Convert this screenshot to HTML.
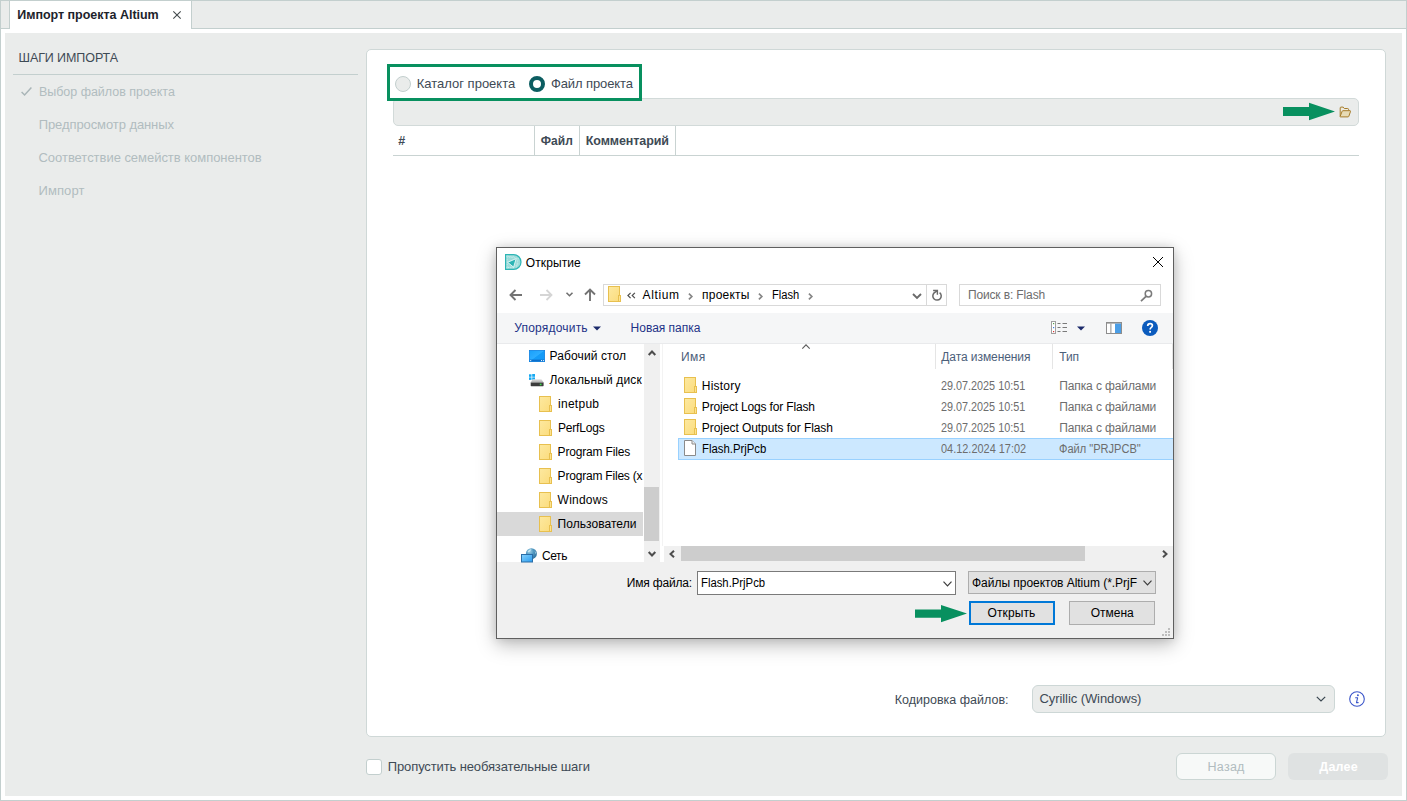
<!DOCTYPE html>
<html lang="ru"><head><meta charset="utf-8"><title>Импорт проекта Altium</title>
<style>
*{box-sizing:border-box;margin:0;padding:0}
html,body{width:1407px;height:801px;overflow:hidden;background:#fff}
body{position:relative;font-family:"Liberation Sans",sans-serif;font-size:13px;color:#3a4650}
.a{position:absolute}
.t{position:absolute;white-space:nowrap;line-height:20px;height:20px;transform-origin:0 50%}
svg{position:absolute;overflow:visible}
/* app chrome */
#frame{left:0;top:0;width:1407px;height:801px;border:1px solid #c3cfce}
#strip{left:1px;top:1px;width:1405px;height:28px;background:#eaeceb;border-bottom:1px solid #c3cfce}
#tabL{left:9px;top:1px;width:1px;height:28px;background:#c3cfce}
#tab{left:10px;top:1px;width:181px;height:28px;background:#fff}
#tabR{left:191px;top:1px;width:1px;height:28px;background:#c3cfce}
#panel{left:5px;top:33px;width:1397px;height:763px;background:#eaeceb}
#sep{left:13px;top:74px;width:345px;height:1px;background:#c3cfce}
#card{left:366px;top:49px;width:1020px;height:688px;background:#fff;border:1px solid #cfd8d7;border-radius:5px}
#hl{left:387px;top:64px;width:255px;height:37px;border:3px solid #08905f;background:#fff}
#path{left:393px;top:98px;width:966px;height:28px;background:#eaeceb;border:1px solid #d2dad9;border-radius:5px}
#hdrline{left:393px;top:155px;width:966px;height:1px;background:#c9d3d2}
.vs{width:1px;top:126px;height:29px;background:#c9d3d2}
.radio{width:16px;height:16px;border-radius:50%}
#rad1{left:395px;top:76px;background:#eaeceb;border:1px solid #c3cfce}
#rad2{left:529px;top:76px;background:#fff;border:4.5px solid #0c5d61}
#sel{left:1032px;top:685px;width:303px;height:28px;background:#eaeceb;border:1px solid #cdd7d6;border-radius:6px}
#cb{left:366px;top:759px;width:16px;height:16px;background:#fff;border:1px solid #c3cfce;border-radius:3px}
#bback{left:1176px;top:753px;width:100px;height:27px;background:#f7f9f8;border:1px solid #cbd6d4;border-radius:6px}
#bnext{left:1288px;top:753px;width:100px;height:27px;background:#dfe2e2;border-radius:6px}
/* ---------- dialog ---------- */
#dlg{left:496px;top:247px;width:678px;height:392px;background:#fff;border:1px solid #5f5f5f;box-shadow:0 6px 18px rgba(0,0,0,.26),0 0 9px rgba(0,0,0,.12)}
#dtool{left:497px;top:313px;width:676px;height:31px;background:#f5f6f7;border-bottom:1px solid #e9eaec}
#dbot{left:497px;top:562px;width:676px;height:76px;background:#f0f0f0}
#addr{left:603px;top:284px;width:324px;height:22px;border:1px solid #d9d9d9;background:#fff}
#addrdiv{left:926px;top:284px;width:21px;height:22px;border:1px solid #d9d9d9;background:#fff}
#srch{left:959px;top:284px;width:202px;height:22px;border:1px solid #d9d9d9;background:#fff}
#navsel{left:497px;top:512px;width:146px;height:24px;background:#d9d9d9}
#vtrack{left:644px;top:344px;width:16px;height:218px;background:#f0f0f0}
#vthumb{left:644px;top:487px;width:15px;height:54px;background:#cdcdcd}
#vline{left:662px;top:344px;width:1px;height:202px;background:#f3f3f3}
#htrack{left:664px;top:546px;width:509px;height:16px;background:#f0f0f0}
#hthumb{left:681px;top:546px;width:404px;height:15px;background:#cdcdcd}
.cs{width:1px;top:344px;height:25px;background:#e5e5e5}
#rowsel{left:678px;top:438px;width:495px;height:22px;background:#cce8ff;border:1px solid #99d1ff;border-right:none}
#fname{left:697px;top:571px;width:259px;height:24px;background:#fff;border:1px solid #7a7a7a}
#filt{left:968px;top:571px;width:188px;height:23px;background:#e1e1e1;border:1px solid #adadad}
#bopen{left:969px;top:601px;width:86px;height:24px;background:#e1e1e1;border:2px solid #0078d7}
#bcanc{left:1069px;top:601px;width:86px;height:24px;background:#e1e1e1;border:1px solid #adadad}

</style></head>
<body>
<svg width="0" height="0" style="left:0;top:0"><defs><linearGradient id="gf" x1="0" y1="0" x2="1" y2="1"><stop offset="0" stop-color="#fde9a0"/><stop offset="1" stop-color="#fbdc7d"/></linearGradient><g id="fold16"><rect x="0.5" y="0.5" width="11" height="15" fill="url(#gf)" stroke="#e8c04f" stroke-width="1"/><rect x="10.5" y="9.5" width="2" height="6" fill="#fde390" stroke="#e8c04f" stroke-width="1"/></g></defs></svg>
<div id="frame" class="a"></div>
<div id="strip" class="a"></div>
<div id="tabL" class="a"></div><div id="tab" class="a"></div><div id="tabR" class="a"></div>
<svg id="tabx" style="left:173px;top:11px" width="8" height="8" viewBox="0 0 8 8"><path d="M0.3 0.3 L7.7 7.7 M7.7 0.3 L0.3 7.7" stroke="#454c4e" stroke-width="1.1" fill="none"/></svg>
<div id="panel" class="a"></div>
<div id="sep" class="a"></div>
<svg id="chk" style="left:21px;top:87px" width="11" height="9" viewBox="0 0 11 9"><path d="M0.6 5 L3.6 8 L10.4 0.6" stroke="#a9b5b7" stroke-width="1.45" fill="none"/></svg>
<div id="card" class="a"></div>
<div id="path" class="a"></div>
<div id="hl" class="a"></div>
<div id="rad1" class="a radio"></div>
<div id="rad2" class="a radio"></div>
<div class="a vs" style="left:534px"></div><div class="a vs" style="left:579px"></div><div class="a vs" style="left:675px"></div>
<div id="hdrline" class="a"></div>
<svg id="garrow1" style="left:1283px;top:102px" width="53" height="19" viewBox="0 0 53 19"><path d="M0 5 H26 V0.8 L52 9.5 L26 18.2 V14 H0 Z" fill="#08905f"/></svg>
<svg id="fold" style="left:1339px;top:106px" width="13" height="12" viewBox="0 0 13 12"><path d="M1.2 10.4 V1.9 Q1.2 1.1 2 1.1 H4.2 L5.3 2.5 H8.7 Q9.4 2.5 9.5 3.2 L9.8 4.6" fill="#eeebe0" stroke="#a67c2a" stroke-width="1"/><path d="M1.4 10.9 Q0.9 10.9 1.2 10.3 L3.2 5.1 Q3.4 4.7 3.9 4.7 H11 Q11.7 4.7 11.5 5.4 L9.8 10.4 Q9.6 10.9 9 10.9 Z" fill="#e7dbb5" stroke="#a67c2a" stroke-width="1" stroke-linejoin="round"/></svg>
<div id="sel" class="a"></div>
<svg id="selchev" style="left:1316px;top:696px" width="10" height="6" viewBox="0 0 10 6"><path d="M0.8 0.8 L5 5 L9.2 0.8" fill="none" stroke="#3a4650" stroke-width="1.2"/></svg>
<svg id="info" style="left:1349px;top:691px" width="16" height="16" viewBox="0 0 16 16"><circle cx="8" cy="8" r="7.3" fill="#fff" stroke="#3b55c9" stroke-width="1.1"/><circle cx="8.9" cy="4.3" r="0.95" fill="#3b55c9"/><path d="M6.6 6.8 H8.6 L7.5 11.6 H9.2" fill="none" stroke="#3b55c9" stroke-width="1.1" stroke-linecap="round" stroke-linejoin="round"/></svg>
<div id="cb" class="a"></div>
<div id="bback" class="a"></div>
<div id="bnext" class="a"></div>
<!-- ===== file dialog ===== -->
<div id="dlg" class="a"></div>
<div id="dtool" class="a"></div>
<div id="dbot" class="a"></div>
<svg id="appico" style="left:505px;top:254px" width="16" height="16" viewBox="0 0 16 16"><path d="M0.6 0.6 H8.6 A7.4 7.4 0 0 1 8.6 15.4 H0.6 Z" fill="#9adbd9" stroke="#2db5b5" stroke-width="1.2"/><path d="M1.4 2.3 H9.5 M1.4 13.7 H9.5 M2.2 1.5 V14.5 M13.2 4 L11.6 13.2 M4 3 L12 4.2 M3 13.4 L9 12.9 L13.8 9.5" fill="none" stroke="#d6f2f1" stroke-width="0.7" stroke-dasharray="1 0.7"/><path d="M2.6 8.3 L11.2 4.6 L8.6 13.2 Z" fill="#2cb4b4" stroke="#e9f8f8" stroke-width="0.9" stroke-linejoin="round"/></svg>
<svg id="dclose" style="left:1153px;top:257px" width="10" height="10" viewBox="0 0 10 10"><path d="M0 0 L10 10 M10 0 L0 10" stroke="#000" stroke-width="1" fill="none"/></svg>
<svg id="navback" style="left:509px;top:289px" width="14" height="12" viewBox="0 0 14 12"><path d="M13 6 H1.7 M6.5 1 L1.5 6 L6.5 11" fill="none" stroke="#737373" stroke-width="1.9"/></svg>
<svg id="navfwd" style="left:539px;top:289px" width="14" height="12" viewBox="0 0 14 12"><path d="M1 6 H12.3 M7.5 1 L12.5 6 L7.5 11" fill="none" stroke="#d5d5d5" stroke-width="1.8"/></svg>
<svg id="navdd" style="left:566px;top:292px" width="7" height="5" viewBox="0 0 7 5"><path d="M0.5 0.7 L3.5 3.7 L6.5 0.7" fill="none" stroke="#707070" stroke-width="1.6"/></svg>
<svg id="navup" style="left:584px;top:288px" width="12" height="14" viewBox="0 0 12 14"><path d="M6 13 V1.7 M1 6.5 L6 1.5 L11 6.5" fill="none" stroke="#737373" stroke-width="1.9"/></svg>
<div id="addr" class="a"></div><div id="addrdiv" class="a"></div><div id="srch" class="a"></div>
<svg class="fo" style="left:608px;top:286px" width="13" height="16" viewBox="0 0 13 16"><use href="#fold16"/></svg>
<svg id="ch0" style="left:627px;top:292px" width="9" height="7" viewBox="0 0 9 7"><path d="M3.6 0.8 L0.9 3.5 L3.6 6.2 M7.9 0.8 L5.2 3.5 L7.9 6.2" fill="none" stroke="#4f4f4f" stroke-width="1.2"/></svg>
<svg class="chv" style="left:688px;top:293px" width="5" height="7" viewBox="0 0 5 7"><path d="M0.9 0.7 L3.8 3.5 L0.9 6.3" fill="none" stroke="#868686" stroke-width="1.7"/></svg>
<svg class="chv" style="left:758px;top:293px" width="5" height="7" viewBox="0 0 5 7"><path d="M0.9 0.7 L3.8 3.5 L0.9 6.3" fill="none" stroke="#868686" stroke-width="1.7"/></svg>
<svg class="chv" style="left:808px;top:293px" width="5" height="7" viewBox="0 0 5 7"><path d="M0.9 0.7 L3.8 3.5 L0.9 6.3" fill="none" stroke="#868686" stroke-width="1.7"/></svg>
<svg id="addrdd" style="left:912px;top:293px" width="10" height="7" viewBox="0 0 10 7"><path d="M1 1 L5 5 L9 1" fill="none" stroke="#6a6a6a" stroke-width="1.9"/></svg>
<svg id="refr" style="left:931px;top:289px" width="12" height="13" viewBox="0 0 12 13"><path d="M8.6 3.6 A4.2 4.2 0 1 1 3.1 3.9 L6.1 1.9" fill="none" stroke="#6a6a6a" stroke-width="1.5"/><path d="M2.1 1.5 H6.4 V5.7" fill="none" stroke="#6a6a6a" stroke-width="1.4"/></svg>
<svg id="mag" style="left:1140px;top:289px" width="13" height="13" viewBox="0 0 13 13"><circle cx="8.4" cy="4.8" r="3.2" fill="none" stroke="#7a7a7a" stroke-width="1.5"/><path d="M6 7.3 L1 12.2" stroke="#7a7a7a" stroke-width="1.7" fill="none"/></svg>
<svg id="tri1" style="left:593px;top:326px" width="8" height="5" viewBox="0 0 8 5"><path d="M0 0.4 H8 L4 4.6 Z" fill="#1b2a6b"/></svg>
<svg id="viewico" style="left:1051px;top:321px" width="17" height="13" viewBox="0 0 17 13"><rect x="0.5" y="0.5" width="4" height="12" fill="#fff" stroke="#a0a0a0" stroke-width="1"/><rect x="2" y="2" width="1.2" height="1.2" fill="#55a04a"/><rect x="2" y="6" width="1.2" height="1.2" fill="#3c7be0"/><rect x="2" y="10" width="1.2" height="1.2" fill="#d33"/><path d="M6.5 2.5 H9.5 M11.5 2.5 H16 M6.5 6.5 H9.5 M11.5 6.5 H16 M6.5 10.5 H9.5 M11.5 10.5 H16" stroke="#7a7a7a" stroke-width="1"/></svg>
<svg id="tri2" style="left:1077px;top:326px" width="8" height="5" viewBox="0 0 8 5"><path d="M0 0.4 H8 L4 4.6 Z" fill="#1b2a6b"/></svg>
<svg id="paneico" style="left:1106px;top:322px" width="16" height="12" viewBox="0 0 16 12"><rect x="0.5" y="0.5" width="15" height="11" fill="#fff" stroke="#8d8d8d" stroke-width="1"/><rect x="0" y="0" width="16" height="1.6" fill="#8d8d8d"/><rect x="4.4" y="1.6" width="1" height="10" fill="#8d8d8d"/><rect x="9" y="1.6" width="6" height="9.4" fill="#4b9ee6"/></svg>
<svg id="help" style="left:1142px;top:320px" width="16" height="16" viewBox="0 0 16 16"><circle cx="8" cy="8" r="8" fill="#0b5bbd"/><path d="M5.7 6 Q5.7 3.6 8.1 3.6 Q10.4 3.6 10.4 5.6 Q10.4 6.8 9.1 7.6 Q8.1 8.3 8.1 9.6" fill="none" stroke="#fff" stroke-width="1.7"/><rect x="7.2" y="10.9" width="1.8" height="1.8" fill="#fff"/></svg>
<!-- nav pane -->
<div id="navsel" class="a"></div>
<div id="vtrack" class="a"></div><div id="vthumb" class="a"></div><div id="vline" class="a"></div>
<svg id="vup" style="left:648px;top:350px" width="8" height="6" viewBox="0 0 8 6"><path d="M0.7 5 L4 1.5 L7.3 5" fill="none" stroke="#4d4d4d" stroke-width="2"/></svg>
<svg id="vdn" style="left:648px;top:551px" width="8" height="6" viewBox="0 0 8 6"><path d="M0.7 1 L4 4.5 L7.3 1" fill="none" stroke="#4d4d4d" stroke-width="2"/></svg>
<svg id="deskico" style="left:529px;top:350px" width="16" height="12" viewBox="0 0 16 12"><defs><linearGradient id="gd" x1="0" y1="0" x2="1" y2="1"><stop offset="0" stop-color="#18a0fb"/><stop offset="0.48" stop-color="#2dadff"/><stop offset="0.52" stop-color="#149cf8"/><stop offset="1" stop-color="#1598f5"/></linearGradient></defs><rect x="0.4" y="0.4" width="15.2" height="11.2" fill="url(#gd)" stroke="#0f80e0" stroke-width="0.8"/><rect x="0.8" y="9.6" width="14.4" height="1.8" fill="#0b6fcb"/><rect x="1.2" y="10.1" width="1" height="1" fill="#fff"/><rect x="12" y="10.1" width="1" height="1" fill="#fff"/><rect x="13.9" y="10.1" width="1" height="1" fill="#fff"/></svg>
<svg id="diskico" style="left:529px;top:374px" width="16" height="13" viewBox="0 0 16 13"><defs><linearGradient id="gk" x1="0" y1="0" x2="0" y2="1"><stop offset="0" stop-color="#e3e3e3"/><stop offset="1" stop-color="#a9a9a9"/></linearGradient></defs><rect x="0" y="0.3" width="2.5" height="2.5" fill="#14a8f2"/><rect x="3.2" y="0" width="2.8" height="2.8" fill="#14a8f2"/><rect x="0" y="3.4" width="2.5" height="2.5" fill="#14a8f2"/><rect x="3.2" y="3.4" width="2.8" height="2.8" fill="#14a8f2"/><path d="M3.6 5.2 H12.4 L14.6 8.6 H1.7 Z" fill="url(#gk)"/><rect x="1.7" y="8.4" width="12.9" height="3.8" rx="0.6" fill="#3c3c3c"/><rect x="1.7" y="8.2" width="12.9" height="0.7" fill="#8c8c8c"/><rect x="10.8" y="9.7" width="1.7" height="1.5" fill="#3be04a"/></svg>
<svg id="netico" style="left:521px;top:548px" width="17" height="14" viewBox="0 0 17 14"><defs><radialGradient id="gg" cx="0.35" cy="0.3" r="0.8"><stop offset="0" stop-color="#9fd0e6"/><stop offset="0.45" stop-color="#4f97c0"/><stop offset="1" stop-color="#2f6f9a"/></radialGradient><linearGradient id="gm" x1="0" y1="0" x2="1" y2="1"><stop offset="0" stop-color="#86d2fc"/><stop offset="1" stop-color="#2a9cf0"/></linearGradient></defs><circle cx="10.4" cy="5.7" r="5.5" fill="url(#gg)"/><path d="M6.6 3.4 Q8.2 1.2 10.6 1.1 Q9.6 3.2 7.4 4.4 Z" fill="#d4ecf6" opacity="0.85"/><path d="M13.6 2.6 Q15.4 4.4 15.2 6.6 Q13.8 5.2 13.6 2.6Z" fill="#bfe0ee" opacity="0.8"/><rect x="0.5" y="6.5" width="11" height="7.5" fill="url(#gm)" stroke="#2b6da6" stroke-width="1"/></svg>
<!-- list -->
<div class="a cs" style="left:935px"></div><div class="a cs" style="left:1052px"></div><div class="a cs" style="left:1172px"></div>
<svg id="sortch" style="left:802px;top:343.5px" width="8" height="5" viewBox="0 0 8 5"><path d="M0.3 4.6 L4 0.9 L7.7 4.6" fill="none" stroke="#5c5c5c" stroke-width="1.15"/></svg>
<div id="rowsel" class="a"></div>
<svg id="fileico" style="left:684px;top:440px" width="12" height="16" viewBox="0 0 12 16"><path d="M0.5 0.5 H8 L11.5 4 V15.5 H0.5 Z" fill="#fff" stroke="#8a8a8a" stroke-width="1"/><path d="M8 0.5 V4 H11.5" fill="#f0f0f0" stroke="#8a8a8a" stroke-width="1"/></svg>
<div id="htrack" class="a"></div><div id="hthumb" class="a"></div>
<svg id="hleft" style="left:669px;top:550px" width="6" height="8" viewBox="0 0 6 8"><path d="M5 0.7 L1.5 4 L5 7.3" fill="none" stroke="#4d4d4d" stroke-width="2"/></svg>
<svg id="hright" style="left:1162px;top:550px" width="6" height="8" viewBox="0 0 6 8"><path d="M1 0.7 L4.5 4 L1 7.3" fill="none" stroke="#4d4d4d" stroke-width="2"/></svg>
<!-- bottom -->
<div id="fname" class="a"></div>
<svg id="fnch" style="left:943px;top:581px" width="9" height="6" viewBox="0 0 9 6"><path d="M0.5 0.7 L4.5 4.8 L8.5 0.7" fill="none" stroke="#3c3c3c" stroke-width="1.2"/></svg>
<div id="filt" class="a"></div>
<svg id="flch" style="left:1143px;top:580px" width="9" height="6" viewBox="0 0 9 6"><path d="M0.5 0.7 L4.5 4.8 L8.5 0.7" fill="none" stroke="#3c3c3c" stroke-width="1.2"/></svg>
<div id="bopen" class="a"></div><div id="bcanc" class="a"></div>
<svg id="garrow2" style="left:915px;top:605px" width="53" height="18" viewBox="0 0 53 18"><path d="M0 4.4 H26 V0 L52 8.6 L26 17.2 V12.8 H0 Z" fill="#08905f"/></svg>
<svg id="grip" style="left:1161px;top:627px" width="10" height="10" viewBox="0 0 10 10"><g fill="#bdbdbd"><rect x="7" y="1" width="2" height="2"/><rect x="4" y="4" width="2" height="2"/><rect x="7" y="4" width="2" height="2"/><rect x="1" y="7" width="2" height="2"/><rect x="4" y="7" width="2" height="2"/><rect x="7" y="7" width="2" height="2"/></g></svg>

<svg class="fo" style="left:539px;top:396px" width="13" height="16" viewBox="0 0 13 16"><use href="#fold16"/></svg>
<svg class="fo" style="left:539px;top:420px" width="13" height="16" viewBox="0 0 13 16"><use href="#fold16"/></svg>
<svg class="fo" style="left:539px;top:444px" width="13" height="16" viewBox="0 0 13 16"><use href="#fold16"/></svg>
<svg class="fo" style="left:539px;top:468px" width="13" height="16" viewBox="0 0 13 16"><use href="#fold16"/></svg>
<svg class="fo" style="left:539px;top:492px" width="13" height="16" viewBox="0 0 13 16"><use href="#fold16"/></svg>
<svg class="fo" style="left:539px;top:516px" width="13" height="16" viewBox="0 0 13 16"><use href="#fold16"/></svg>
<svg class="fo" style="left:684px;top:377px" width="13" height="16" viewBox="0 0 13 16"><use href="#fold16"/></svg>
<svg class="fo" style="left:684px;top:398px" width="13" height="16" viewBox="0 0 13 16"><use href="#fold16"/></svg>
<svg class="fo" style="left:684px;top:419px" width="13" height="16" viewBox="0 0 13 16"><use href="#fold16"/></svg>
<span id="t_tab" class="t" style="left:17.3px;top:4.67px;font-size:12.5px;font-weight:700;color:#1d232b;letter-spacing:-0.028px;">Импорт проекта Altium</span>
<span id="t_steps" class="t" style="left:18.5px;top:47.67px;font-size:12.5px;font-weight:400;color:#3e4a55;letter-spacing:-0.079px;">ШАГИ ИМПОРТА</span>
<span id="t_s1" class="t" style="left:38.9px;top:81.67px;font-size:12.5px;font-weight:400;color:#b1bcbf;letter-spacing:-0.019px;">Выбор файлов проекта</span>
<span id="t_s2" class="t" style="left:38.7px;top:114.50px;font-size:13px;font-weight:400;color:#b1bcbf;letter-spacing:-0.084px;">Предпросмотр данных</span>
<span id="t_s3" class="t" style="left:38.5px;top:147.50px;font-size:13px;font-weight:400;color:#b1bcbf;letter-spacing:-0.034px;">Соответствие семейств компонентов</span>
<span id="t_s4" class="t" style="left:38.5px;top:180.50px;font-size:13px;font-weight:400;color:#b1bcbf;letter-spacing:0.089px;">Импорт</span>
<span id="t_r1" class="t" style="left:416.8px;top:73.50px;font-size:13px;font-weight:400;color:#3e4a55;letter-spacing:-0.006px;">Каталог проекта</span>
<span id="t_r2" class="t" style="left:550.9px;top:73.50px;font-size:13px;font-weight:400;color:#3e4a55;letter-spacing:-0.099px;">Файл проекта</span>
<span id="t_h0" class="t" style="left:398.3px;top:130.67px;font-size:12.5px;font-weight:700;color:#3e4a55;letter-spacing:1.947px;">#</span>
<span id="t_h1" class="t" style="left:540.8px;top:130.84px;font-size:12px;font-weight:700;color:#3e4a55;letter-spacing:0.059px;">Файл</span>
<span id="t_h2" class="t" style="left:585.8px;top:130.67px;font-size:12.5px;font-weight:700;color:#3e4a55;letter-spacing:-0.099px;">Комментарий</span>
<span id="t_enc" class="t" style="left:894.7px;top:689.67px;font-size:12.5px;font-weight:400;color:#3e4a55;letter-spacing:0.014px;">Кодировка файлов:</span>
<span id="t_cyr" class="t" style="left:1039.5px;top:688.50px;font-size:13px;font-weight:400;color:#3e4a55;letter-spacing:-0.081px;">Cyrillic (Windows)</span>
<span id="t_skip" class="t" style="left:387.8px;top:756.50px;font-size:13px;font-weight:400;color:#3e4a55;letter-spacing:-0.128px;">Пропустить необязательные шаги</span>
<span id="t_back" class="t" style="left:1207.6px;top:756.67px;font-size:12.5px;font-weight:400;color:#b1bcbf;letter-spacing:0.243px;">Назад</span>
<span id="t_next" class="t" style="left:1319.3px;top:756.67px;font-size:12.5px;font-weight:700;color:#ffffff;letter-spacing:0.213px;">Далее</span>
<span id="d_title" class="t" style="left:525.8px;top:252.84px;font-size:12px;font-weight:400;color:#000000;letter-spacing:0.091px;">Открытие</span>
<span id="d_a1" class="t" style="left:642.6px;top:284.84px;font-size:12px;font-weight:400;color:#000000;letter-spacing:0.631px;">Altium</span>
<span id="d_a2" class="t" style="left:702.1px;top:284.84px;font-size:12px;font-weight:400;color:#000000;letter-spacing:0.211px;">проекты</span>
<span id="d_a3" class="t" style="left:771.9px;top:284.84px;font-size:12px;font-weight:400;color:#000000;transform:scaleX(0.9304);">Flash</span>
<span id="d_srch" class="t" style="left:967.9px;top:284.84px;font-size:12px;font-weight:400;color:#6d6d6d;letter-spacing:-0.130px;">Поиск в: Flash</span>
<span id="d_org" class="t" style="left:514.3px;top:317.84px;font-size:12px;font-weight:400;color:#1e3287;letter-spacing:0.188px;">Упорядочить</span>
<span id="d_new" class="t" style="left:630.6px;top:317.84px;font-size:12px;font-weight:400;color:#1e3287;letter-spacing:-0.015px;">Новая папка</span>
<span id="d_n1" class="t" style="left:549.6px;top:345.84px;font-size:12px;font-weight:400;color:#000000;letter-spacing:0.107px;">Рабочий стол</span>
<span id="d_n2" class="t" style="left:549.6px;top:369.84px;font-size:12px;font-weight:400;color:#000000;letter-spacing:0.144px;">Локальный диск</span>
<span id="d_n3" class="t" style="left:558.0px;top:393.84px;font-size:12px;font-weight:400;color:#000000;letter-spacing:0.271px;">inetpub</span>
<span id="d_n4" class="t" style="left:558.0px;top:417.84px;font-size:12px;font-weight:400;color:#000000;letter-spacing:-0.190px;">PerfLogs</span>
<span id="d_n5" class="t" style="left:557.6px;top:441.84px;font-size:12px;font-weight:400;color:#000000;letter-spacing:-0.166px;">Program Files</span>
<span id="d_n6" class="t" style="left:557.6px;top:465.84px;font-size:12px;font-weight:400;color:#000000;letter-spacing:-0.201px;">Program Files (x</span>
<span id="d_n7" class="t" style="left:557.6px;top:489.84px;font-size:12px;font-weight:400;color:#000000;letter-spacing:0.235px;">Windows</span>
<span id="d_n8" class="t" style="left:557.6px;top:513.84px;font-size:12px;font-weight:400;color:#000000;letter-spacing:0.043px;">Пользователи</span>
<span id="d_n9" class="t" style="left:541.9px;top:545.84px;font-size:12px;font-weight:400;color:#000000;letter-spacing:-0.368px;">Сеть</span>
<span id="d_c1" class="t" style="left:680.9px;top:346.84px;font-size:12px;font-weight:400;color:#4c607a;letter-spacing:0.513px;">Имя</span>
<span id="d_c2" class="t" style="left:941.3px;top:346.84px;font-size:12px;font-weight:400;color:#4c607a;letter-spacing:-0.075px;">Дата изменения</span>
<span id="d_c3" class="t" style="left:1059.2px;top:346.84px;font-size:12px;font-weight:400;color:#4c607a;letter-spacing:-0.058px;">Тип</span>
<span id="d_f1" class="t" style="left:701.8px;top:375.84px;font-size:12px;font-weight:400;color:#000000;letter-spacing:0.226px;">History</span>
<span id="d_f2" class="t" style="left:701.8px;top:396.84px;font-size:12px;font-weight:400;color:#000000;letter-spacing:-0.172px;">Project Logs for Flash</span>
<span id="d_f3" class="t" style="left:701.8px;top:417.84px;font-size:12px;font-weight:400;color:#000000;letter-spacing:-0.064px;">Project Outputs for Flash</span>
<span id="d_f4" class="t" style="left:701.9px;top:438.84px;font-size:12px;font-weight:400;color:#000000;transform:scaleX(0.9452);">Flash.PrjPcb</span>
<span id="d_d0" class="t" style="left:941.3px;top:375.84px;font-size:12px;font-weight:400;color:#6d6d6d;transform:scaleX(0.9013);">29.07.2025 10:51</span>
<span id="d_t0" class="t" style="left:1059.2px;top:375.84px;font-size:12px;font-weight:400;color:#6d6d6d;letter-spacing:-0.102px;">Папка с файлами</span>
<span id="d_d1" class="t" style="left:941.3px;top:396.84px;font-size:12px;font-weight:400;color:#6d6d6d;transform:scaleX(0.9013);">29.07.2025 10:51</span>
<span id="d_t1" class="t" style="left:1059.2px;top:396.84px;font-size:12px;font-weight:400;color:#6d6d6d;letter-spacing:-0.102px;">Папка с файлами</span>
<span id="d_d2" class="t" style="left:941.3px;top:417.84px;font-size:12px;font-weight:400;color:#6d6d6d;transform:scaleX(0.9013);">29.07.2025 10:51</span>
<span id="d_t2" class="t" style="left:1059.2px;top:417.84px;font-size:12px;font-weight:400;color:#6d6d6d;letter-spacing:-0.102px;">Папка с файлами</span>
<span id="d_d3" class="t" style="left:941.3px;top:438.84px;font-size:12px;font-weight:400;color:#6d6d6d;transform:scaleX(0.9109);">04.12.2024 17:02</span>
<span id="d_t3" class="t" style="left:1059.2px;top:438.84px;font-size:12px;font-weight:400;color:#6d6d6d;transform:scaleX(0.9222);">Файл "PRJPCB"</span>
<span id="d_fnl" class="t" style="left:626.7px;top:572.84px;font-size:12px;font-weight:400;color:#000000;letter-spacing:-0.174px;">Имя файла:</span>
<span id="d_fnv" class="t" style="left:700.9px;top:572.84px;font-size:12px;font-weight:400;color:#000000;transform:scaleX(0.9422);">Flash.PrjPcb</span>
<span id="d_flt" class="t" style="left:972.0px;top:572.84px;font-size:12px;font-weight:400;color:#000000;letter-spacing:-0.028px;">Файлы проектов Altium (*.PrjF</span>
<span id="d_open" class="t" style="left:987.6px;top:602.84px;font-size:12px;font-weight:400;color:#000000;letter-spacing:0.093px;">Открыть</span>
<span id="d_canc" class="t" style="left:1090.8px;top:602.84px;font-size:12px;font-weight:400;color:#000000;letter-spacing:-0.032px;">Отмена</span>
</body></html>
